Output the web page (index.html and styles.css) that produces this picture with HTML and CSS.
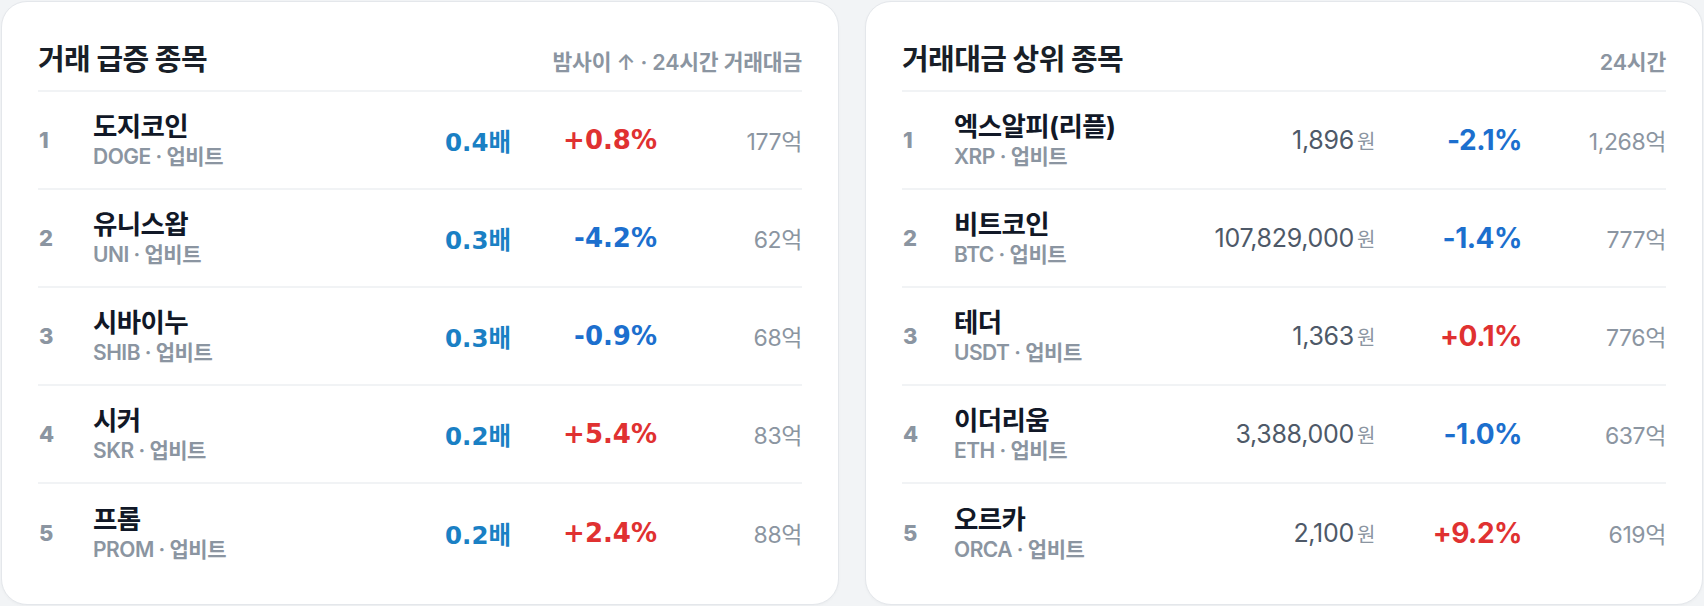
FILE: index.html
```html
<!DOCTYPE html>
<html lang="ko">
<head>
<meta charset="utf-8">
<title>거래 종목</title>
<link rel="stylesheet" href="styles.css">
</head>
<body>
<main class="board">
  <section class="card surge">
    <header class="card-head">
      <h2 class="title">거래 급증 종목</h2>
      <span class="meta">밤사이 ↑ · 24시간 거래대금</span>
    </header>
    <ol class="rows">
      <li class="row"><span class="rank">1</span><div class="coin"><span class="name">도지코인</span><span class="sub">DOGE · 업비트</span></div><span class="ratio">0.4배</span><span class="pct up">+0.8%</span><span class="vol">177억</span></li>
      <li class="row"><span class="rank">2</span><div class="coin"><span class="name">유니스왑</span><span class="sub">UNI · 업비트</span></div><span class="ratio">0.3배</span><span class="pct down">-4.2%</span><span class="vol">62억</span></li>
      <li class="row"><span class="rank">3</span><div class="coin"><span class="name">시바이누</span><span class="sub">SHIB · 업비트</span></div><span class="ratio">0.3배</span><span class="pct down">-0.9%</span><span class="vol">68억</span></li>
      <li class="row"><span class="rank">4</span><div class="coin"><span class="name">시커</span><span class="sub">SKR · 업비트</span></div><span class="ratio">0.2배</span><span class="pct up">+5.4%</span><span class="vol">83억</span></li>
      <li class="row"><span class="rank">5</span><div class="coin"><span class="name">프롬</span><span class="sub">PROM · 업비트</span></div><span class="ratio">0.2배</span><span class="pct up">+2.4%</span><span class="vol">88억</span></li>
    </ol>
  </section>
  <section class="card top">
    <header class="card-head">
      <h2 class="title">거래대금 상위 종목</h2>
      <span class="meta">24시간</span>
    </header>
    <ol class="rows">
      <li class="row"><span class="rank">1</span><div class="coin"><span class="name">엑스알피(리플)</span><span class="sub">XRP · 업비트</span></div><span class="price">1,896<small>원</small></span><span class="pct down">-2.1%</span><span class="vol">1,268억</span></li>
      <li class="row"><span class="rank">2</span><div class="coin"><span class="name">비트코인</span><span class="sub">BTC · 업비트</span></div><span class="price">107,829,000<small>원</small></span><span class="pct down">-1.4%</span><span class="vol">777억</span></li>
      <li class="row"><span class="rank">3</span><div class="coin"><span class="name">테더</span><span class="sub">USDT · 업비트</span></div><span class="price">1,363<small>원</small></span><span class="pct up">+0.1%</span><span class="vol">776억</span></li>
      <li class="row"><span class="rank">4</span><div class="coin"><span class="name">이더리움</span><span class="sub">ETH · 업비트</span></div><span class="price">3,388,000<small>원</small></span><span class="pct down">-1.0%</span><span class="vol">637억</span></li>
      <li class="row"><span class="rank">5</span><div class="coin"><span class="name">오르카</span><span class="sub">ORCA · 업비트</span></div><span class="price">2,100<small>원</small></span><span class="pct up">+9.2%</span><span class="vol">619억</span></li>
    </ol>
  </section>
</main>
</body>
</html>
```
FILE: styles.css
```css
* { box-sizing: border-box; }
html, body { margin: 0; padding: 0; }
body {
  background: #f2f4f6;
  font-family: Inter, "Noto Sans CJK KR", sans-serif;
  color: #191f28;
}
.board {
  display: grid;
  grid-template-columns: 1fr 1fr;
  gap: 26px;
  padding: 1px;
  height: 606px;
}
.card {
  background: #fff;
  border: 1px solid #e4e7eb;
  border-radius: 26px;
  padding: 32px 36px 22px;
  box-shadow: 0 1px 3px rgba(0,0,0,0.03);
}
.card-head {
  display: flex;
  justify-content: space-between;
  align-items: center;
  height: 58px;
  padding-bottom: 4px;
  border-bottom: 2px solid #f1f3f5;
}
.title {
  margin: 0;
  font-size: 29px;
  line-height: 38px;
  font-weight: 700;
  letter-spacing: -0.6px;
  color: #191f28;
}
.meta {
  font-size: 21.5px;
  font-weight: 600;
  color: #8b95a1;
  letter-spacing: -0.2px;
}
.rows { list-style: none; margin: 0; padding: 0; }
.row {
  display: grid;
  align-items: center;
  height: 98px;
  border-bottom: 2px solid #f1f3f5;
}
.row:last-child { border-bottom: 0; }
.surge .row { grid-template-columns: 55px 1fr 120px 146px 145px; }
.top .row { grid-template-columns: 52px 1fr 240px 147px 144px; }
.rank {
  font-size: 22px;
  font-weight: 800;
  color: #8b95a1;
  padding-left: 1px;
}
.coin { display: flex; flex-direction: column; }
.name {
  font-size: 26.5px;
  line-height: 33px;
  font-weight: 700;
  color: #111827;
  letter-spacing: -0.6px;
}
.sub {
  font-size: 21px;
  line-height: 27px;
  font-weight: 600;
  color: #8b95a1;
  letter-spacing: -0.5px;
}
.ratio, .pct, .vol, .price { text-align: right; }
.ratio {
  font-family: "DejaVu Sans", "Noto Sans CJK KR", sans-serif;
  font-size: 24.5px;
  font-weight: 700;
  color: #1a80c4;
}
.surge .pct {
  font-family: "DejaVu Sans", "Noto Sans CJK KR", sans-serif;
  font-size: 26px;
  font-weight: 700;
}
.top .pct {
  font-size: 28px;
  font-weight: 700;
  letter-spacing: -0.5px;
}
.pct.up { color: #e03131; }
.pct.down { color: #1c6fce; }
.vol {
  font-size: 23px;
  color: #8b95a1;
  letter-spacing: -0.4px;
}
.price {
  font-size: 25px;
  color: #4e5968;
  letter-spacing: -0.3px;
}
.price small {
  font-size: 20px;
  color: #8b95a1;
  margin-left: 3px;
}
```
